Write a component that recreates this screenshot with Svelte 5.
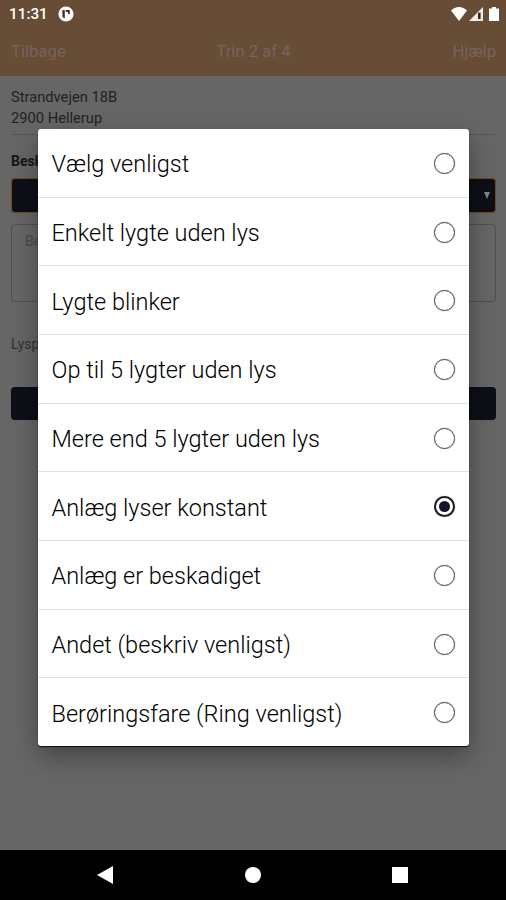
<script>
  const options = [
    "Vælg venligst",
    "Enkelt lygte uden lys",
    "Lygte blinker",
    "Op til 5 lygter uden lys",
    "Mere end 5 lygter uden lys",
    "Anlæg lyser konstant",
    "Anlæg er beskadiget",
    "Andet (beskriv venligst)",
    "Berøringsfare (Ring venligst)",
  ];
  let selected = $state("Anlæg lyser konstant");
</script>

<div class="screen">
  <header>
    <div class="status">
      <span class="clock">11:31</span>
      <svg class="app-icon" width="16" height="16" viewBox="0 0 16 16">
        <circle cx="8" cy="8" r="7.6" fill="#fff" />
        <path d="M4.4 4h2.4v8.2a4 4 0 0 1-2.4-1.4z" fill="#4a3324" />
        <path d="M7.8 4h4v4H9.9V6H7.8z" fill="#4a3324" />
      </svg>
      <div class="signals">
        <svg width="16" height="14" viewBox="0 0 16 14">
          <path d="M0 3.6Q3.5 0 8 0t8 3.6L8 14z" fill="#fff" />
        </svg>
        <svg width="14" height="14" viewBox="0 0 14 14">
          <path d="M0 14L14 0v14z" fill="#f1ece8" />
          <path d="M9 5.6h2.6V12H9z" fill="#302820" />
        </svg>
        <svg class="battery" width="10" height="14" viewBox="0 0 10 14">
          <path d="M3 0h4v1.5h3V14H0V1.5h3z" fill="#fff" />
        </svg>
      </div>
    </div>
    <nav>
      <span>Tilbage</span>
      <span>Trin 2 af 4</span>
      <span>Hjælp</span>
    </nav>
  </header>

  <main>
    <address>Strandvejen 18B<br />2900 Hellerup</address>
    <div class="label">Besk</div>
    <div class="select">
      <svg width="6" height="7" viewBox="0 0 6 7"><path d="M0 0h6L3 7z" fill="#858585" /></svg>
    </div>
    <div class="textarea">Be</div>
    <div class="note">Lysp</div>
    <div class="submit"></div>
  </main>

  <footer>
    <svg width="16" height="20" viewBox="0 0 16 20"><path d="M16 1v18L0 10z" fill="#fff" /></svg>
    <svg width="16" height="16" viewBox="0 0 16 16"><circle cx="8" cy="8" r="8" fill="#fff" /></svg>
    <svg width="16" height="16" viewBox="0 0 16 16"><path d="M0 0h16v16H0z" fill="#fff" /></svg>
  </footer>

  <ul class="dialog" role="listbox">
    {#each options as option (option)}
      <li>
        <button
          role="option"
          aria-selected={selected === option}
          class:selected={selected === option}
          onclick={() => (selected = option)}
        >
          <span>{option}</span>
          <i class="radio"></i>
        </button>
      </li>
    {/each}
  </ul>
</div>

<style>
  :global(body) {
    background: #666;
  }
  .screen {
    position: relative;
    display: flex;
    flex-direction: column;
    width: 506px;
    height: 900px;
    overflow: hidden;
    background: #666;
    font-family: Roboto, sans-serif;
  }
  svg {
    display: block;
  }
  header {
    height: 76px;
    background: #674c36;
  }
  .status {
    display: flex;
    align-items: center;
    height: 27px;
    padding: 0 7px 0 9px;
  }
  .clock {
    color: #fff;
    font-size: 15.3px;
    font-weight: 500;
    width: 49px;
  }
  .signals {
    display: flex;
    align-items: center;
    gap: 2px;
    margin-left: auto;
  }
  .battery {
    margin-left: 4px;
  }
  nav {
    display: grid;
    grid-template-columns: 1fr auto 1fr;
    align-items: center;
    height: 49px;
    padding: 0 10px 0 11px;
    color: #75655c;
    font-size: 16.7px;
  }
  nav span:last-child {
    text-align: right;
  }
  main {
    flex: 1;
    padding: 11px 10px 0 11px;
  }
  address {
    height: 47px;
    border-bottom: 1px solid #595959;
    color: #222;
    font-size: 14.7px;
    font-style: normal;
    line-height: 21px;
  }
  .label {
    margin-top: 17px;
    color: #151515;
    font-size: 14px;
    font-weight: 700;
    line-height: 18px;
  }
  .select {
    display: flex;
    align-items: center;
    justify-content: flex-end;
    box-sizing: border-box;
    height: 35px;
    margin-top: 8px;
    padding-right: 5px;
    border: 1px solid #74491b;
    border-radius: 4px;
    background: #0d0f17;
    box-shadow: 0 0 1px #80531f;
  }
  .textarea {
    box-sizing: border-box;
    height: 78px;
    margin-top: 11px;
    padding: 8px 13px;
    border: 1px solid #505050;
    border-radius: 4px;
    color: #4b4b4b;
    font-size: 14px;
  }
  .note {
    margin-top: 33px;
    color: #333;
    font-size: 14px;
    line-height: 18px;
  }
  .submit {
    height: 33px;
    margin-top: 34px;
    border-radius: 4px;
    background: #0d0f17;
  }
  footer {
    display: flex;
    align-items: center;
    justify-content: space-between;
    box-sizing: border-box;
    height: 50px;
    padding: 0 98px 0 97px;
    background: #000;
  }
  /* option list opened over the form */
  .dialog {
    position: absolute;
    top: 129px;
    left: 38px;
    width: 431px;
    height: 617px;
    margin: 0;
    padding: 0;
    list-style: none;
    display: flex;
    flex-direction: column;
    overflow: hidden;
    border-radius: 3px;
    background: #fff;
    box-shadow: 0 1px 1px #111, 0 10px 26px rgba(0, 0, 0, 0.35);
  }
  li {
    flex: 1;
    box-sizing: border-box;
    border-bottom: 1px solid #e0e0e0;
  }
  li:last-child {
    border-bottom: none;
  }
  button {
    display: flex;
    align-items: center;
    justify-content: space-between;
    width: 100%;
    height: 100%;
    padding: 3px 14px 0 13.5px;
    border: none;
    background: none;
    color: #000;
    font: 300 23.5px Roboto, sans-serif;
    text-align: left;
    cursor: pointer;
  }
  .radio {
    display: flex;
    align-items: center;
    justify-content: center;
    box-sizing: border-box;
    width: 21px;
    height: 21px;
    margin-bottom: 2px;
    border: 1.5px solid #444;
    box-shadow: 0 0 1px #777;
    border-radius: 50%;
  }
  .selected .radio {
    border: 2px solid #1a1a1f;
  }
  .selected .radio::after {
    content: "";
    width: 11px;
    height: 11px;
    border-radius: 50%;
    background: #14142a;
  }
</style>
